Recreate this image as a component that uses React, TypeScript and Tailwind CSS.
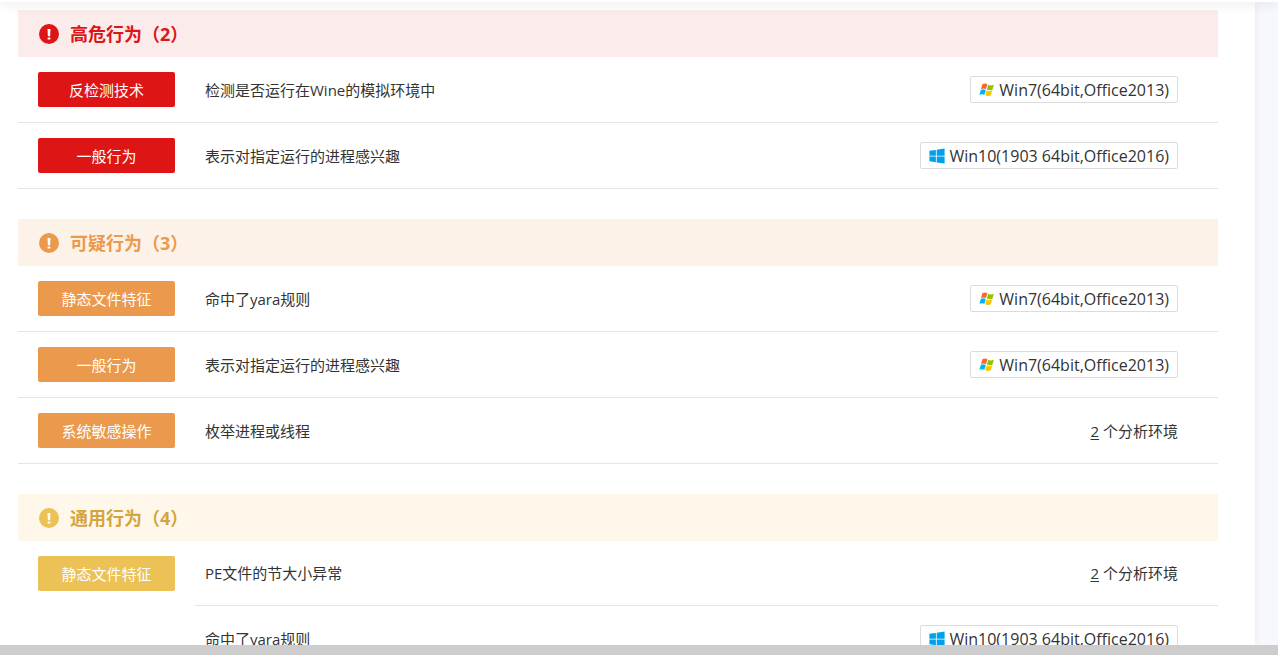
import clsx from "clsx";

type Level = "danger" | "suspicious" | "common";

type Env = "win7" | "win10" | number;

interface BehaviorItem {
  text: string;
  env: Env;
}

interface BehaviorGroup {
  label: string;
  items: BehaviorItem[];
}

interface Section {
  level: Level;
  title: string;
  count: number;
  groups: BehaviorGroup[];
}

const SECTIONS: Section[] = [
  {
    level: "danger",
    title: "高危行为",
    count: 2,
    groups: [
      {
        label: "反检测技术",
        items: [{ text: "检测是否运行在Wine的模拟环境中", env: "win7" }],
      },
      {
        label: "一般行为",
        items: [{ text: "表示对指定运行的进程感兴趣", env: "win10" }],
      },
    ],
  },
  {
    level: "suspicious",
    title: "可疑行为",
    count: 3,
    groups: [
      {
        label: "静态文件特征",
        items: [{ text: "命中了yara规则", env: "win7" }],
      },
      {
        label: "一般行为",
        items: [{ text: "表示对指定运行的进程感兴趣", env: "win7" }],
      },
      {
        label: "系统敏感操作",
        items: [{ text: "枚举进程或线程", env: 2 }],
      },
    ],
  },
  {
    level: "common",
    title: "通用行为",
    count: 4,
    groups: [
      {
        label: "静态文件特征",
        items: [
          { text: "PE文件的节大小异常", env: 2 },
          { text: "命中了yara规则", env: "win10" },
        ],
      },
    ],
  },
];

const STYLES = {
  danger: {
    header: "bg-[#fbeceb] text-[#dd1515]",
    icon: "text-[#dd1515]",
    label: "bg-[#dd1515]",
  },
  suspicious: {
    header: "bg-[#fdf2e8] text-[#eb994d]",
    icon: "text-[#eb994d]",
    label: "bg-[#eb994d]",
  },
  common: {
    header: "bg-[#fef7ea] text-[#d4a53c]",
    icon: "text-[#ecc256]",
    label: "bg-[#ecc256]",
  },
};

function AlertIcon({ className }: { className?: string }) {
  return (
    <svg
      viewBox="0 0 20 20"
      className={clsx("h-5 w-5 shrink-0", className)}
      aria-hidden="true"
    >
      <circle cx="10" cy="10" r="10" fill="currentColor" />
      <path d="M8.500 5h3l-.4 7.300H8.900z" fill="#fff" />
      <rect x="8.600" y="13.600" width="2.800" height="2" rx=".4" fill="#fff" />
    </svg>
  );
}

function Win7Icon() {
  return (
    <svg viewBox="0 0 16 16" className="h-4 w-4 shrink-0" aria-hidden="true">
      <path d="M3.400 2.200C5 1.200 6.800 1.200 8.400 2.200L7 7.100C5.400 6.200 3.700 6.200 2 7.100z" fill="#f8682c" />
      <path d="M9.200 2.700C11 3.700 12.800 3.700 14.900 2.800L13.400 7.700C11.600 8.600 9.700 8.600 7.900 7.600z" fill="#91c300" />
      <path d="M1.800 7.900C3.500 7 5.200 7 6.800 7.900L5.400 12.800C3.800 11.900 2.100 11.900 .4 12.800z" fill="#00b4f1" />
      <path d="M7.600 8.400C9.400 9.400 11.300 9.400 13.200 8.500L11.800 13.300C9.900 14.400 8 14.400 6.200 13.300z" fill="#ffc300" />
    </svg>
  );
}

function Win10Icon() {
  return (
    <svg viewBox="0 0 16 16" className="h-4 w-4 shrink-0" aria-hidden="true">
      <path
        d="M.4 2.800L6.900 1.900V7.700H.4zM7.700 1.700L15.600.5V7.700H7.700zM.4 8.400H6.900V14.200L.4 13.300zM7.700 8.400H15.600V15.600L7.700 14.400z"
        fill="#00a1eb"
      />
    </svg>
  );
}

function Environment({ env }: { env: Env }) {
  if (typeof env === "number") {
    return (
      <span className="shrink-0">
        <a href="#environments" className="underline underline-offset-2">
          {env}
        </a>{" "}
        个分析环境
      </span>
    );
  }

  return (
    <span className="flex h-[27px] shrink-0 items-center gap-1 rounded-xs border border-[#dcdcdc] px-2 text-base">
      {env === "win7" ? <Win7Icon /> : <Win10Icon />}
      {env === "win7" ? "Win7(64bit,Office2013)" : "Win10(1903 64bit,Office2016)"}
    </span>
  );
}

function BehaviorSection({ section }: { section: Section }) {
  const styles = STYLES[section.level];

  return (
    <section>
      <h2
        className={clsx(
          "flex h-[47px] items-center gap-[11px] px-[21px] text-lg font-bold",
          styles.header
        )}
      >
        <AlertIcon className={styles.icon} />
        <span>
          {section.title}（{section.count}）
        </span>
      </h2>
      {section.groups.map((group) => (
        <div
          key={group.label}
          className="flex items-start border-b border-[#e5e5e5]"
        >
          <div className="shrink-0 px-5 py-[15px]">
            <div
              className={clsx(
                "flex h-[35px] w-[137px] items-center justify-center rounded-xs text-white",
                styles.label
              )}
            >
              {group.label}
            </div>
          </div>
          <ul className="flex-1 divide-y divide-[#e5e5e5]">
            {group.items.map((item) => (
              <li
                key={item.text}
                className="flex h-[65px] items-center justify-between pr-10 pl-2.5"
              >
                <span>{item.text}</span>
                <Environment env={item.env} />
              </li>
            ))}
          </ul>
        </div>
      ))}
    </section>
  );
}

export default function App() {
  return (
    <div className="flex h-screen flex-col overflow-hidden bg-white font-['Open_Sans','Noto_Sans_CJK_SC',sans-serif] text-[15px] leading-5 text-[#333333]">
      <header className="relative z-10 h-0.5 shrink-0 bg-white shadow-[0_0_12px_rgba(0,0,0,0.3)]" />
      <div className="flex min-h-0 flex-1 overflow-hidden bg-[#f7f8fe]">
        <main className="flex flex-1 flex-col gap-[30px] bg-white pt-2 pr-[37px] pl-[18px] shadow-[0_0_8px_rgba(0,0,0,0.06)]">
          {SECTIONS.map((section) => (
            <BehaviorSection key={section.level} section={section} />
          ))}
        </main>
        <div className="w-[23px] shrink-0" />
      </div>
      <div className="h-2.5 shrink-0 bg-[#cdcdcd]" />
    </div>
  );
}
